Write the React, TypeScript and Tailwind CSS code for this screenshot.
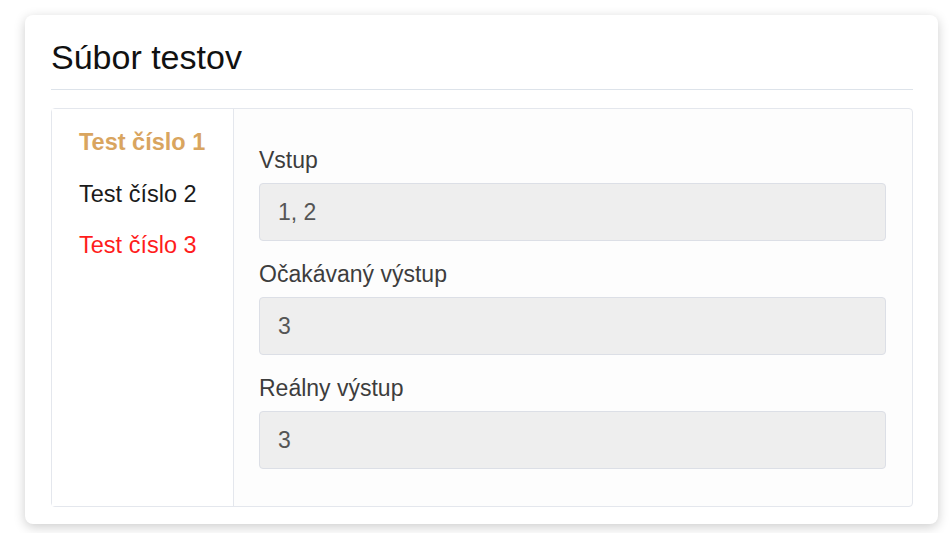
import { useState } from 'react';

type TestCase = {
  id: number;
  label: string;
  input: string;
  expected: string;
  actual: string;
  passed: boolean;
};

const tests: TestCase[] = [
  { id: 1, label: 'Test číslo 1', input: '1, 2', expected: '3', actual: '3', passed: true },
  { id: 2, label: 'Test číslo 2', input: '2, 2', expected: '4', actual: '4', passed: true },
  { id: 3, label: 'Test číslo 3', input: '2, 5', expected: '7', actual: '6', passed: false },
];

const Field = ({ label, value }: { label: string; value: string }) => (
  <div className="flex flex-col">
    <label className="text-[23px] leading-[26px] text-[#3d3d3d]">{label}</label>
    <div className="mt-[10px] flex h-[58px] items-center rounded-[4px] border border-[#dcdfe6] bg-[#eeeeee] pl-[18px] text-[23px] text-[#555555]">
      {value}
    </div>
  </div>
);

export default function App() {
  const [active, setActive] = useState(1);
  const current = tests.find((t) => t.id === active) ?? tests[0];

  return (
    <div className="min-h-screen bg-white pl-[25px] pt-[15px] font-['Liberation_Sans',Arial,sans-serif]">
      <div className="w-[913px] rounded-[8px] bg-white pb-[17px] pl-[26px] pr-[25px] pt-[22px] shadow-[0_3px_12px_rgba(0,0,0,0.2)]">
        <h2 className="text-[34px] leading-[40px] text-[#111111]">Súbor testov</h2>
        <hr className="mt-[12px] border-t border-[#dde3ea]" />

        <div className="mt-[18px] flex h-[399px] rounded-[4px] border border-[#e4e7ed] bg-[#fdfdfd]">
          {/* test list */}
          <div className="flex w-[182px] flex-col gap-[25.5px] border-r border-[#e4e7ed] bg-white pl-[27px] pt-[20px]">
            {tests.map((t) => {
              const color = t.id === active
                ? 'font-bold text-[#d9a55f]'
                : t.passed
                  ? 'text-[#1a1a1a]'
                  : 'text-[#ff1c1c]';
              return (
                <button
                  key={t.id}
                  onClick={() => setActive(t.id)}
                  className={`text-left text-[23.5px] leading-[26px] ${color}`}
                >
                  {t.label}
                </button>
              );
            })}
          </div>

          {/* detail of selected test */}
          <div className="flex flex-1 flex-col gap-[20px] pl-[25px] pr-[26px] pt-[38px]">
            <Field label="Vstup" value={current.input} />
            <Field label="Očakávaný výstup" value={current.expected} />
            <Field label="Reálny výstup" value={current.actual} />
          </div>
        </div>
      </div>
    </div>
  );
}
